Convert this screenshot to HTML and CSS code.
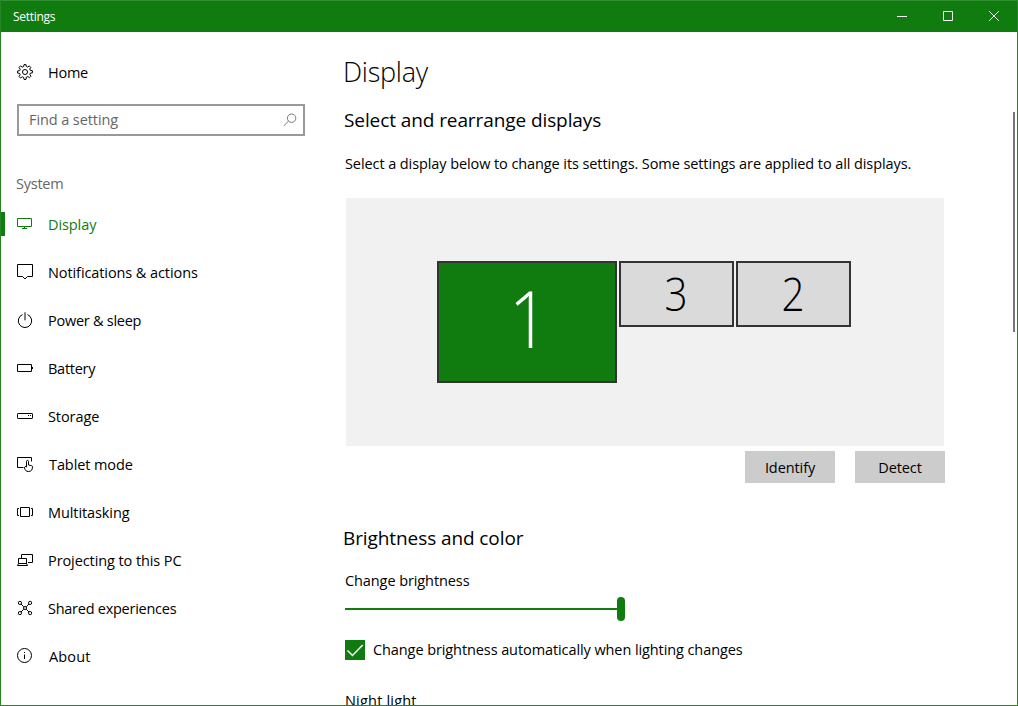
FILE: index.html
```html
<!DOCTYPE html>
<html lang="en">
<head>
<meta charset="utf-8">
<title>Settings</title>
<link rel="stylesheet" href="styles.css">
</head>
<body>
<div class="window">
  <header class="titlebar">
    <span class="caption">Settings</span>
    <div class="controls">
      <svg class="control" viewBox="0 0 46 31"><path d="M18 15.500h10"/></svg>
      <svg class="control" viewBox="0 0 46 31"><path d="M18.500 10.500h9v9h-9z"/></svg>
      <svg class="control" viewBox="0 0 46 31"><path d="M18.200 10.200l9.600 9.600M27.800 10.200l-9.600 9.600"/></svg>
    </div>
  </header>
  <div class="body">
    <aside class="sidebar">
      <a class="home"><svg class="icon" viewBox="0 0 16 16"><path d="M6.700 2.500 7 .6h2l.3 1.900 1.400.6 1.600-1.200 1.500 1.500-1.100 1.600.6 1.300 2.100.4v2.100l-2 .3-.6 1.400 1.200 1.700-1.500 1.500-1.700-1.200-1.400.6L9 15.400H7l-.4-2-1.400-.6-1.700 1.200L2 12.500l1.200-1.700-.6-1.400-2-.3V7l2-.4.6-1.400L2 3.400l1.500-1.500 1.700 1.200z"/><circle cx="8" cy="8" r="2.500"/></svg><span class="tight">Home</span></a>
      <div class="search"><span>Find a setting</span><svg class="lens" viewBox="0 0 14 14"><circle cx="8.600" cy="5.200" r="4.200"/><path d="M5.500 8.200.8 12.800"/></svg></div>
      <div class="group">System</div>
      <nav>
        <a class="item active"><svg class="icon" viewBox="0 0 16 16"><path d="M.5 2.500h14v8H.5zM7.500 10.500v2M5 12.500h5"/></svg><span>Display</span></a>
        <a class="item"><svg class="icon" viewBox="0 0 16 16"><path d="M.5.5h15v12h-5L8 15l-2.500-2.500h-5z"/></svg><span>Notifications &amp; actions</span></a>
        <a class="item"><svg class="icon" viewBox="0 0 16 16"><path d="M5.500 2.600a6.700 6.700 0 1 0 5 0M8 .3v8"/></svg><span class="tight">Power &amp; sleep</span></a>
        <a class="item"><svg class="icon" viewBox="0 0 16 16"><path d="M.5 4.500h14v7H.5zM15.500 7v2"/></svg><span class="tight">Battery</span></a>
        <a class="item"><svg class="icon" viewBox="0 0 16 16"><rect x=".5" y="5.500" width="15" height="5" rx=".6"/><path d="M11 7.500h1M13 7.500h1"/></svg><span>Storage</span></a>
        <a class="item"><svg class="icon" viewBox="0 0 16 16"><path d="M6.500 11.500h-6v-10h14v4"/><path d="M9.500 11V5.300c0-1.200 2-1.200 2 0V9l3 .6c.7.200 1 .600 1 1.200 0 2.900-1.200 4.700-4 4.700-2.400 0-3.200-1.100-4-3.500-.4-1.400 1.100-2.100 2-1z"/></svg><span class="nudge">Tablet mode</span></a>
        <a class="item"><svg class="icon" viewBox="0 0 16 16"><path d="M3.500 3.500h9v9h-9zM2 4.500H.5v7H2M14 4.500h1.500v7H14"/></svg><span>Multitasking</span></a>
        <a class="item"><svg class="icon" viewBox="0 0 16 16"><path d="M4.500 6V2.500h11v8H11M1.500 11.500v-5h8v5M.5 13.500l1-2h8l1 2z"/></svg><span>Projecting to this PC</span></a>
        <a class="item"><svg class="icon" viewBox="0 0 16 16"><path d="m4 4 2.800 2.800M12 4 9.200 6.800M4 12l2.800-2.800M12 12 9.200 9.200"/><circle cx="2.900" cy="2.900" r="1.600"/><circle cx="13.100" cy="2.900" r="1.600"/><circle cx="2.900" cy="13.100" r="1.600"/><circle cx="13.100" cy="13.100" r="1.600"/><circle cx="8" cy="8" r="1.500"/></svg><span class="tight">Shared experiences</span></a>
        <a class="item"><svg class="icon" viewBox="0 0 16 16"><circle cx="7.500" cy="7.500" r="7"/><path d="M7.500 6.500V11M7.500 4v1"/></svg><span class="nudge loose">About</span></a>
      </nav>
    </aside>
    <main class="content">
      <h1>Display</h1>
      <h2 class="arrange">Select and rearrange displays</h2>
      <p class="hint">Select a display below to change its settings. Some settings are applied to all displays.</p>
      <div class="stage">
        <div class="monitor primary"><span class="digit">1</span></div>
        <div class="monitor third"><span class="digit">3</span></div>
        <div class="monitor second"><span class="digit">2</span></div>
      </div>
      <div class="buttons"><button>Identify</button><button>Detect</button></div>
      <h2 class="color">Brightness and color</h2>
      <div class="label">Change brightness</div>
      <div class="slider"><div class="track"></div><div class="thumb"></div></div>
      <label class="check"><svg class="tick" viewBox="0 0 20 20"><path d="m2.500 10.500 5 5L17.700 5"/></svg><span>Change brightness automatically when lighting changes</span></label>
      <div class="night">Night light</div>
    </main>
    <div class="scrollbar"></div>
  </div>
</div>
</body>
</html>
```
FILE: styles.css
```css
* { box-sizing: border-box; }
body {
  margin: 0;
  font: 14.5px/20px "Open Sans", "Noto Sans", sans-serif;
  letter-spacing: -0.09px;
  color: #000;
}
svg { fill: none; stroke: currentColor; stroke-width: 1; flex: none; }
h1, h2, p { margin: 0; font-weight: 400; white-space: nowrap; }
span { white-space: nowrap; }
.window {
  width: 1018px; height: 706px; overflow: hidden;
  display: flex; flex-direction: column;
  background: #fff; border: 1px solid #258625; border-top-color: #2f8e2f;
}
.titlebar {
  flex: none; height: 31px; display: flex; justify-content: space-between; align-items: center;
  padding-left: 12px; background: #107c10; color: #fff; font-size: 12px; letter-spacing: -0.3px;
}
.controls { display: flex; }
.control { width: 46px; height: 31px; }
.body { flex: 1; min-height: 0; display: flex; }
.sidebar { width: 342px; flex: none; }
.icon { width: 16px; height: 16px; }
.home, .item { display: flex; align-items: center; gap: 15px; padding-left: 16px; height: 48px; }
.home span, .item span { padding-top: 2px; }
.tight { letter-spacing: -0.26px; }
.loose { letter-spacing: 0.15px; }
.item .nudge { padding-left: 1px; }
.home { margin-top: 16px; }
.search {
  margin: 8px 0 0 16px; width: 288px; height: 32px; padding: 0 6px 0 10px;
  display: flex; align-items: center; justify-content: space-between;
  border: 2px solid #999; color: #666;
}
.lens { width: 14px; height: 14px; color: #777; }
.group { padding: 0 0 0 15px; margin: 38px 0 6px; color: #666; letter-spacing: -0.25px; }
.item.active { color: #107c10; background: linear-gradient(#107c10, #107c10) 0 12px / 4px 24px no-repeat; }
.content { flex: 1; min-width: 0; overflow: hidden; padding-left: 1px; }
h1 { font-size: 27px; line-height: 36px; margin: 22px 0 0 -1px; font-weight: 350; letter-spacing: -0.25px; }
h2 { font-size: 19px; line-height: 28px; }
.arrange { margin-top: 16px; }
.hint { margin: 20px 0 0 1px; }
.stage { position: relative; width: 598px; height: 248px; margin: 24px 0 0 2px; background: #f1f1f1; }
.monitor {
  position: absolute; top: 63px; width: 115px; height: 66px; padding-bottom: 2px;
  border: 2px solid #333; background: #dadada;
  display: flex; justify-content: center; align-items: center;
  font-size: 46px; line-height: 1; font-weight: 300; letter-spacing: 0;
}
.digit { transform: scaleX(0.88); }
.primary { left: 91px; width: 180px; height: 122px; padding: 0 0 10px 4px; background: #107c10; color: #fff; font-size: 80px; }
.third { left: 273px; }
.second { left: 390px; }
.buttons { display: flex; gap: 20px; margin: 5px 0 0 401px; }
button {
  width: 90px; height: 32px; padding: 2px 0 0; border: 0; background: #ccc;
  font: inherit; letter-spacing: inherit; color: inherit;
}
.color { margin: 41px 0 0 -1px; }
.label { margin: 19px 0 0 1px; }
.slider { display: flex; align-items: center; height: 24px; margin: 6px 0 0 1px; }
.track { width: 272px; height: 2px; background: #107c10; }
.thumb { width: 8px; height: 24px; border-radius: 4px; background: #107c10; }
.check { display: flex; align-items: center; gap: 8px; margin: 19px 0 0 1px; }
.tick { width: 20px; height: 20px; background: #107c10; color: #fff; stroke-width: 1.5; }
.night { margin: 31px 0 0 1px; letter-spacing: 0.2px; }
.scrollbar { width: 2px; height: 220px; margin: 80px 2px 0 0; background: #767676; }
```
